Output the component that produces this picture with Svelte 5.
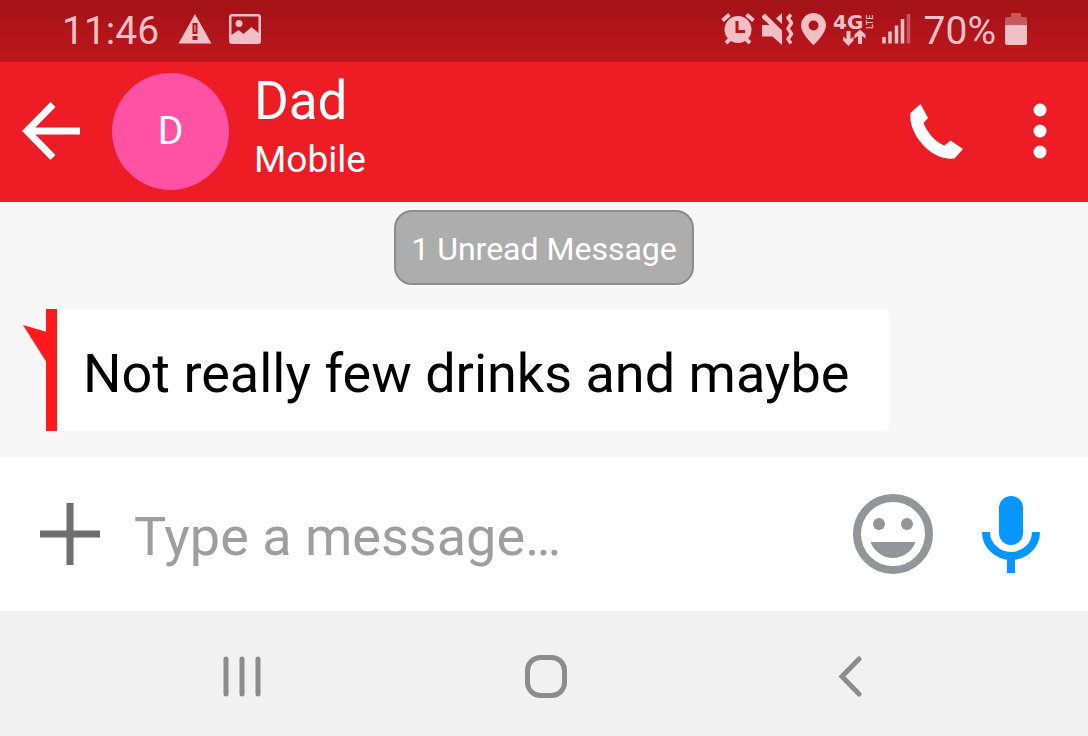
<script lang="ts">
  let draft = $state('');

  const contact = { name: 'Dad', line: 'Mobile' };
  const unread = 1;
  const messages = [{ id: 1, text: 'Not really few drinks and maybe' }];
</script>

<div class="screen">
  <div class="status-bar">
    <span class="clock">11:46</span>
    <svg class="warning" width="34" height="30" viewBox="0 0 34 30" aria-hidden="true">
      <path fill="currentColor" fill-rule="evenodd" d="M17 0 33.500 29.500H.5zM14.500 9v11h5V9zm0 13v4h5v-4zM16.500 11h1v7h-1z" />
    </svg>
    <svg class="picture" width="32" height="30" viewBox="0 0 32 30" aria-hidden="true">
      <path fill="currentColor" fill-rule="evenodd" d="M3 0h26a3 3 0 0 1 3 3v24a3 3 0 0 1-3 3H3a3 3 0 0 1-3-3V3a3 3 0 0 1 3-3zM2.500 2.500V21l7-5 5 4 8-7 7 6V2.500z" />
      <circle cx="10" cy="9.500" r="3.500" fill="currentColor" />
    </svg>

    <div class="indicators">
      <svg width="34" height="32" viewBox="0 0 34 32" aria-hidden="true">
        <path d="M1.500 7.500 8.500 1.500M32.500 7.500 25.500 1.500M5 30l5-5M29 30l-5-5" stroke="currentColor" stroke-width="4" fill="none" />
        <circle cx="17" cy="16.500" r="13.500" fill="currentColor" />
        <path d="M16 8v10.500h8" fill="none" stroke="#b5161c" stroke-width="3" />
      </svg>
      <svg width="32" height="32" viewBox="0 0 32 32" aria-hidden="true">
        <path fill="currentColor" d="M0 3 3 .5 20 17.500V32l-9.500-8.500H0V12h7.500L0 5zM20 0v11l-6-5.500z" />
        <path d="M29 1.500 26 5l3.500 5-3.500 5.500 3.500 5.500-3.500 5 3 4.500" fill="none" stroke="currentColor" stroke-width="3.500" stroke-linejoin="round" />
      </svg>
      <svg width="25" height="32" viewBox="0 0 25 32" aria-hidden="true">
        <path fill="currentColor" fill-rule="evenodd" d="M12.500 0A12.500 12.500 0 0 1 25 12.500C25 19 17.500 27.500 12.500 32 7.500 27.500 0 19 0 12.500A12.500 12.500 0 0 1 12.500 0zm0 7.500a5 5 0 1 0 0 10 5 5 0 0 0 0-10z" />
      </svg>
      <svg width="42" height="50" viewBox="0 0 42 50" role="img" aria-label="4G LTE">
        <text x="0" y="25" class="net-gen">4G</text>
        <text transform="translate(40 25) rotate(-90)" class="net-type">LTE</text>
        <path fill="currentColor" d="M13.500 27h4v8l3-2.500v4L15.500 42 10 36.500v-4l3.500 2.500zM25 40h4v-8l3.500 2.500v-4L27 25.500l-5.500 5v4L25 32z" />
      </svg>
      <svg width="29" height="30" viewBox="0 0 29 30" aria-hidden="true">
        <path d="M2 29.500V23M8 29.500V17.500M14.500 29.500V11.500M20.500 29.500V5" stroke="currentColor" stroke-width="3.500" />
        <path d="M26.500 29.500V0" stroke="currentColor" stroke-width="3.500" opacity="0.400" />
      </svg>
      <span class="percent">70%</span>
      <svg width="22" height="32" viewBox="0 0 22 32" aria-hidden="true">
        <path fill="currentColor" opacity="0.400" d="M6 0h10v4h4a2 2 0 0 1 2 2v6H0V6a2 2 0 0 1 2-2h4z" />
        <path fill="currentColor" d="M0 12h22v18a2 2 0 0 1-2 2H2a2 2 0 0 1-2-2z" />
      </svg>
    </div>
  </div>

  <header>
    <button class="back" aria-label="Back">
      <svg width="58" height="58" viewBox="0 0 58 58" aria-hidden="true">
        <path d="M31 2.500 5 29l26 26.500M5 29h53" fill="none" stroke="currentColor" stroke-width="7" />
      </svg>
    </button>
    <div class="avatar">{contact.name[0]}</div>
    <div class="contact">
      <h1>{contact.name}</h1>
      <p>{contact.line}</p>
    </div>
    <button class="call" aria-label="Call">
      <svg width="54" height="55" viewBox="0 0 54 55" aria-hidden="true">
        <path fill="currentColor" d="M10.500 0 18 14l-4.500 5c4 10 12 19 21 22.500l6-5L53 45l-8.500 9.500C20 57-2 29 .5 9z" />
      </svg>
    </button>
    <button class="more" aria-label="More options">
      <svg width="14" height="56" viewBox="0 0 14 56" fill="currentColor" aria-hidden="true">
        <circle cx="7" cy="7" r="6.500" />
        <circle cx="7" cy="28" r="6.500" />
        <circle cx="7" cy="49" r="6.500" />
      </svg>
    </button>
  </header>

  <main>
    <div class="unread">{unread} Unread Message</div>
    {#each messages as message (message.id)}
      <div class="bubble">
        <svg class="tail" width="24" height="40" viewBox="0 0 24 40" aria-hidden="true">
          <path fill="currentColor" d="M0 0 24 7v31z" />
        </svg>
        {message.text}
      </div>
    {/each}
  </main>

  <form class="compose" onsubmit={(e) => e.preventDefault()}>
    <button type="button" class="attach" aria-label="Add attachment">
      <svg width="60" height="62" viewBox="0 0 60 62" aria-hidden="true">
        <path d="M30 0v62M0 31h60" stroke="currentColor" stroke-width="7" />
      </svg>
    </button>
    <input type="text" bind:value={draft} placeholder="Type a message…" aria-label="Message" />
    <button type="button" class="emoji" aria-label="Emoji">
      <svg width="80" height="80" viewBox="0 0 80 80" aria-hidden="true">
        <circle cx="40" cy="40" r="36" fill="none" stroke="currentColor" stroke-width="8" />
        <circle cx="26" cy="30" r="6" fill="currentColor" />
        <circle cx="54" cy="30" r="6" fill="currentColor" />
        <path fill="currentColor" d="M17.500 48h45C59 57.500 50 64 40 64s-19-6.500-22.500-16z" />
      </svg>
    </button>
    <button type="button" class="mic" aria-label="Record voice message">
      <svg width="58" height="77" viewBox="0 0 58 77" aria-hidden="true">
        <rect x="17" y="0" width="24" height="49" rx="12" fill="currentColor" />
        <path d="M4 36a25 24 0 0 0 50 0M29 60v17" fill="none" stroke="currentColor" stroke-width="8" />
      </svg>
    </button>
  </form>

  <nav aria-label="System">
    <button aria-label="Recent apps">
      <svg width="40" height="42" viewBox="0 0 40 42" aria-hidden="true">
        <path d="M4 4v35M20 4v35M36 4v35" stroke="currentColor" stroke-width="5" stroke-linecap="round" />
      </svg>
    </button>
    <button aria-label="Home">
      <svg width="44" height="44" viewBox="0 0 44 44" aria-hidden="true">
        <rect x="3.500" y="3.500" width="37" height="38" rx="13" fill="none" stroke="currentColor" stroke-width="5" />
      </svg>
    </button>
    <button aria-label="Back">
      <svg width="24" height="42" viewBox="0 0 24 42" aria-hidden="true">
        <path d="M21 4 4 21.500 21 39" fill="none" stroke="currentColor" stroke-width="5" stroke-linecap="round" />
      </svg>
    </button>
  </nav>
</div>

<style>
  :global(body) { margin: 0; background: #f1f1f1; }

  .screen {
    display: flex; flex-direction: column; min-height: 100vh;
    font-family: Roboto, "Liberation Sans", sans-serif;
  }
  button {
    display: flex; align-items: center; justify-content: center; flex-shrink: 0;
    padding: 0; border: 0; background: none; color: inherit; cursor: pointer;
  }
  svg { display: block; flex-shrink: 0; }

  .status-bar {
    display: flex; align-items: center;
    padding: 3px 61px 7px 62px;
    background: linear-gradient(#a21217, #bf171d);
    color: #f1bfc4; font-size: 39px; line-height: 48px;
  }
  .clock, .percent { padding-top: 4px; }
  .warning { margin-left: 19px; }
  .picture { margin-left: 17px; }
  .indicators { display: flex; align-items: center; gap: 7px; margin-left: auto; }
  .net-gen { font-family: "DejaVu Sans", sans-serif; font-size: 20px; font-weight: 700; fill: currentColor; }
  .net-type { font-size: 9px; font-weight: 500; fill: currentColor; }
  .percent { margin: 0 2px 0 6px; }

  header {
    display: flex; align-items: center;
    padding: 10px 41px 12px 22px;
    background: #ee1c25; color: #fff;
  }
  .avatar {
    display: flex; align-items: center; justify-content: center;
    width: 117px; height: 117px; margin-left: 32px; border-radius: 50%;
    background: #ff52a5; font-size: 39px;
  }
  .contact { margin-left: 25px; }
  h1, p { margin: 0; font-weight: 400; }
  h1 { font-size: 53px; line-height: 58px; }
  p { font-size: 37px; line-height: 60px; }
  .call { margin-left: auto; }
  .more { margin-left: 69px; }

  main {
    display: flex; flex-direction: column; align-items: flex-start; gap: 24px;
    padding: 8px 46px 26px; background: #f7f7f7;
  }
  .unread {
    align-self: center; padding: 17px 15px 14px;
    border: 2px solid #8c8c8c; border-radius: 18px;
    background: #adadad; color: #fff; font-size: 32px; line-height: 40px;
  }
  .bubble {
    position: relative; padding: 33px 41px 25px 26px;
    border-left: 11px solid #ff1a1d; border-radius: 0 8px 8px 0;
    background: #fff; color: #000; font-size: 54px; line-height: 64px;
  }
  .tail { position: absolute; left: -34px; top: 16px; color: #ff1a1d; }

  .compose {
    display: flex; align-items: center;
    padding: 37px 48px 37px 40px; background: #fff;
  }
  .attach { color: #6e6e6e; }
  input {
    flex: 1; min-width: 0; margin: 0 24px 0 34px; padding: 6px 0 0;
    border: 0; outline: 0; background: none; color: #000;
    font-family: inherit; font-size: 54px; line-height: 64px;
  }
  input::placeholder { color: #9e9e9e; opacity: 1; }
  .emoji { color: #949599; }
  .mic { margin-left: 49px; color: #0596ff; }

  nav {
    display: flex; align-items: center; flex: 1;
    padding: 38px 86px 34px 90px; background: #f1f1f1; color: #8c8c8c;
  }
  nav button { flex: 1; }
</style>
